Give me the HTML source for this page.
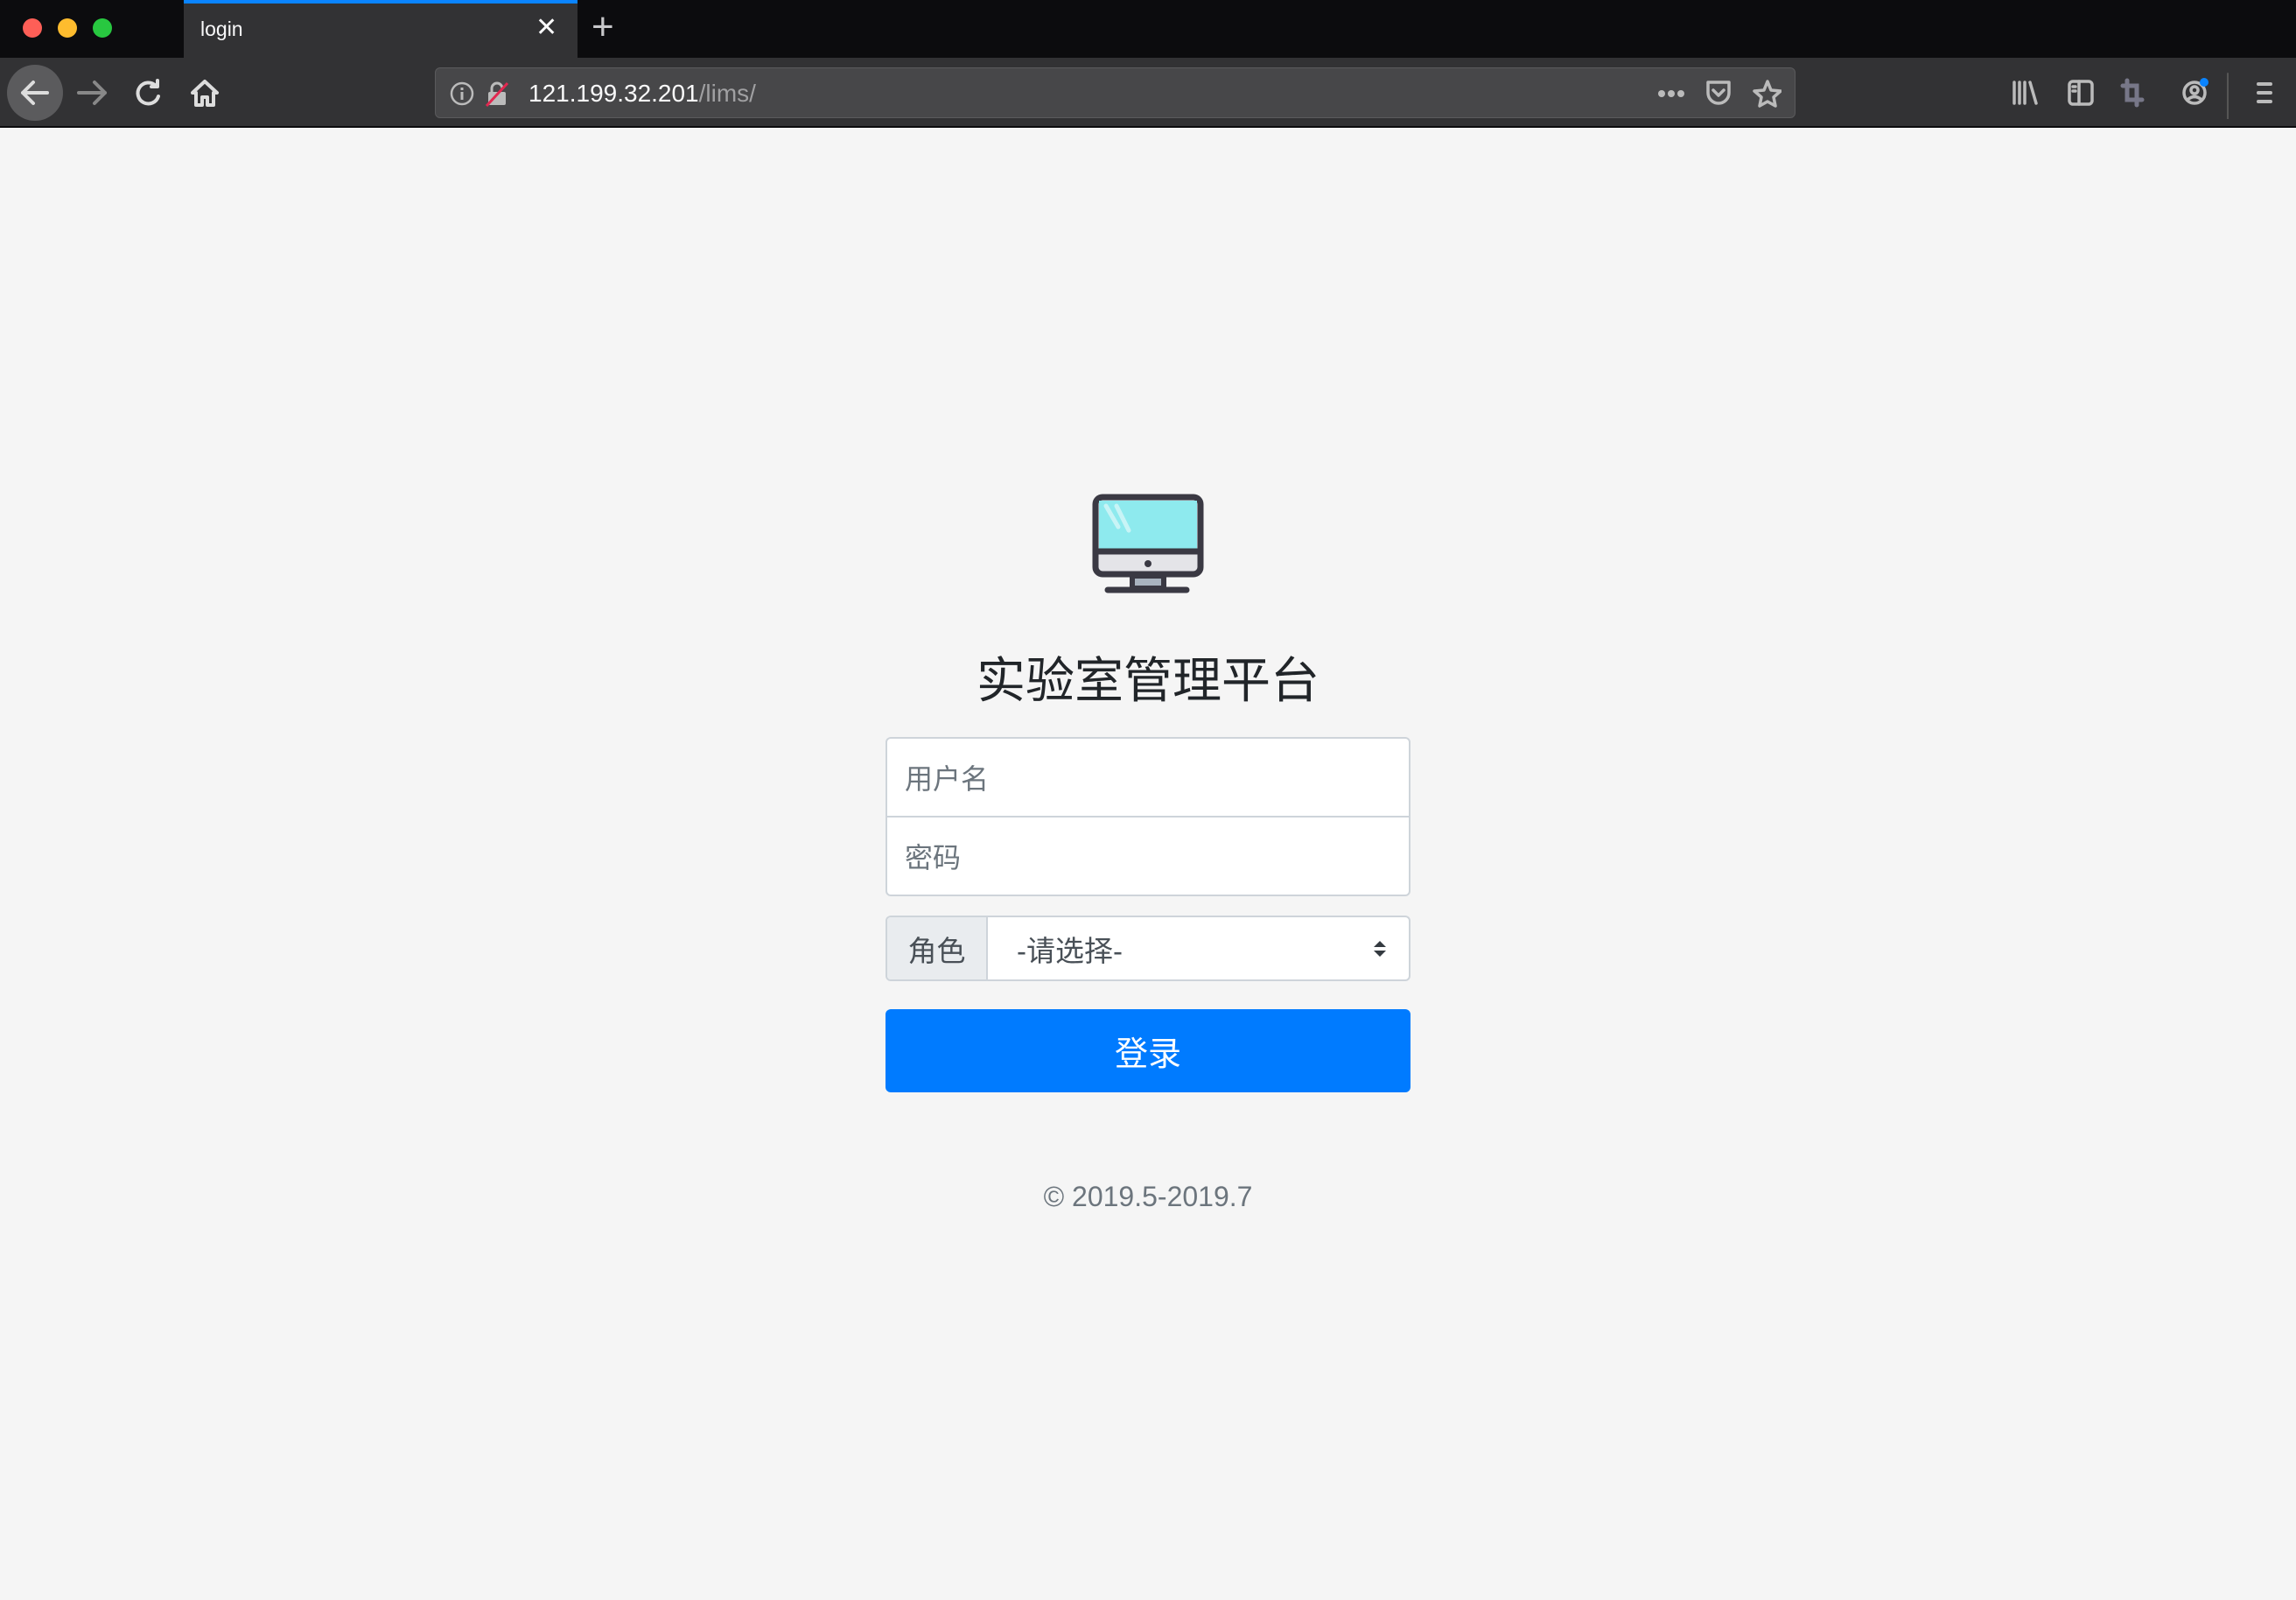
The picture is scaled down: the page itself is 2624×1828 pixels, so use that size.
<!DOCTYPE html>
<html><head><meta charset="utf-8"><style>
*{margin:0;padding:0;box-sizing:border-box}
body{width:2624px;height:1828px;background:#f5f5f5;font-family:"Liberation Sans","Noto Sans CJK SC",sans-serif;position:relative;overflow:hidden}
.abs{position:absolute}
#tabs{left:0;top:0;width:2624px;height:66px;background:#0c0c0e}
#tool{left:0;top:66px;width:2624px;height:80px;background:#323234;border-bottom:2px solid #0c0c0e}
.dot{width:22px;height:22px;border-radius:50%;top:21px}
#tab{left:210px;top:0;width:450px;height:66px;background:#323234;border-top:4px solid #0a84ff}
#url{left:497px;top:77px;width:1555px;height:58px;background:#474749;border:1px solid #5a5a5c;border-radius:6px}
.inp{left:1012px;width:600px;background:#fff;border:2px solid #ced4da;color:#6c757d;font-size:32px;padding-left:20px;display:flex;align-items:center}
</style></head><body>
<div id="tabs" class="abs"></div>
<div class="abs dot" style="left:26px;background:#fe5f57"></div>
<div class="abs dot" style="left:66px;background:#febc2e"></div>
<div class="abs dot" style="left:106px;background:#28c840"></div>
<div id="tab" class="abs"><span class="abs" style="left:19px;top:16px;color:#f9f9fa;font-size:23px">login</span>
<span class="abs" style="left:402px;top:10px;color:#f9f9fa;font-size:30px">✕</span></div>
<div class="abs" style="left:676px;top:6px;color:#c8c8ca;font-size:44px;font-weight:300">+</div>
<div id="tool" class="abs"></div>
<div class="abs" style="left:8px;top:74px;width:64px;height:64px;border-radius:50%;background:#5b5b5d"></div>
<svg class="abs" style="left:0;top:66px" width="260" height="80" viewBox="0 0 260 80" fill="none" stroke-linecap="round" stroke-linejoin="round">
<path d="M54 40H26M38 28L26 40L38 52" stroke="#ddd" stroke-width="4"/>
<path d="M90 40H120M108 28L120 40L108 52" stroke="#888" stroke-width="4"/>
<path d="M178 32A12 12 0 1 0 181 44M180 26V33H173" stroke="#ddd" stroke-width="4"/>
<path d="M224 54V40H220L234 27L248 40H244V54H237V45H231V54Z" stroke="#ddd" stroke-width="4"/>
</svg>
<div id="url" class="abs">
<svg class="abs" style="left:16px;top:14px" width="80" height="30"><circle cx="14" cy="15" r="12" stroke="#bbb" stroke-width="2.5" fill="none"/><rect x="12.5" y="13" width="3" height="9" fill="#bbb"/><rect x="12.5" y="8" width="3" height="3" fill="#bbb"/><rect x="44" y="13" width="20" height="15" rx="2" fill="#bbb"/><path d="M48 13V9a6 6 0 0 1 12 0" stroke="#bbb" stroke-width="3" fill="none"/><path d="M42 29L66 3" stroke="#e22850" stroke-width="3"/></svg>
<span class="abs" style="left:106px;top:13px;font-size:28px;color:#f9f9fa">121.199.32.201<span style="color:#a0a0a2">/lims/</span></span>
<svg class="abs" style="left:1396px;top:22px" width="40" height="14" fill="#bbb"><circle cx="5" cy="7" r="4"/><circle cx="16" cy="7" r="4"/><circle cx="27" cy="7" r="4"/></svg>
<svg class="abs" style="left:1448px;top:12px" width="90" height="34" fill="none" stroke="#bbb" stroke-width="3.5" stroke-linejoin="round" stroke-linecap="round"><path d="M6 4H30V16A12 12 0 0 1 6 16Z"/><path d="M12 13L18 19L24 13"/><path d="M74 3L78 13L89 14L81 21L83 31L74 26L65 31L67 21L59 14L70 13Z"/></svg>
</div>
<svg class="abs" style="left:2290px;top:80px" width="334" height="56" fill="none" stroke="#bbb" stroke-width="3.5" stroke-linecap="round">
<path d="M12 14V38M18 14V38M24 14V38M30 14L37 38"/>
<rect x="75" y="13" width="26" height="26" rx="4"/><path d="M86 13V39M79 19H82M79 24H82"/>
<path d="M141 12V34H158M136 18H152V40" stroke="#778" stroke-width="5"/>
<circle cx="218" cy="26" r="12"/><circle cx="218" cy="23" r="4"/><path d="M210 34Q218 27 226 34"/>
<path d="M256 4V56" stroke="#555" stroke-width="2"/>
<path d="M291 16H305M291 26H305M291 36H305" stroke-width="4"/></svg>
<div class="abs" style="left:2514px;top:89px;width:10px;height:10px;border-radius:50%;background:#0a84ff"></div>

<svg class="abs" style="left:1248px;top:564px" width="128" height="115" viewBox="0 0 128 115">
<rect x="4" y="4" width="120" height="88" rx="8" fill="#e4e4e8" stroke="#3a3943" stroke-width="7"/>
<rect x="8" y="8" width="112" height="56" fill="#8eeaee"/>
<path d="M4 66H124" stroke="#3a3943" stroke-width="7"/>
<circle cx="64" cy="80" r="4" fill="#3a3943"/>
<rect x="46" y="94" width="36" height="14" fill="#a9b3bf" stroke="#3a3943" stroke-width="6"/>
<path d="M18 110H108" stroke="#3a3943" stroke-width="7" stroke-linecap="round"/>
<path d="M16 14L30 38M28 14L42 42" stroke="#c8f4f6" stroke-width="5" stroke-linecap="round"/>
</svg>
<div class="abs" style="left:1012px;top:738px;width:600px;text-align:center;font-size:56px;line-height:80px;color:#212529">实验室管理平台</div>
<div class="abs inp" style="top:842px;height:92px;border-radius:6px 6px 0 0">用户名</div>
<div class="abs inp" style="top:932px;height:92px;border-radius:0 0 6px 6px">密码</div>
<div class="abs" style="left:1012px;top:1046px;width:600px;height:75px;border:2px solid #ced4da;border-radius:6px;background:#fff;overflow:hidden">
<div class="abs" style="left:0;top:0;width:115px;height:71px;background:#e9ecef;border-right:2px solid #ced4da;font-size:33px;color:#495057;display:flex;align-items:center;justify-content:center">角色</div>
<div class="abs" style="left:148px;top:0;height:71px;display:flex;align-items:center;font-size:33px;color:#495057">-请选择-</div>
<svg class="abs" style="left:555px;top:25px" width="16" height="22"><path d="M1 9L8 2L15 9Z M1 13L8 20L15 13Z" fill="#343a40"/></svg>
</div>
<div class="abs" style="left:1012px;top:1153px;width:600px;height:95px;background:#007bff;border-radius:6px;color:#fff;font-size:38px;display:flex;align-items:center;justify-content:center">登录</div>
<div class="abs" style="left:1012px;top:1349px;width:600px;text-align:center;font-size:32px;color:#6c757d">© 2019.5-2019.7</div>
</body></html>
